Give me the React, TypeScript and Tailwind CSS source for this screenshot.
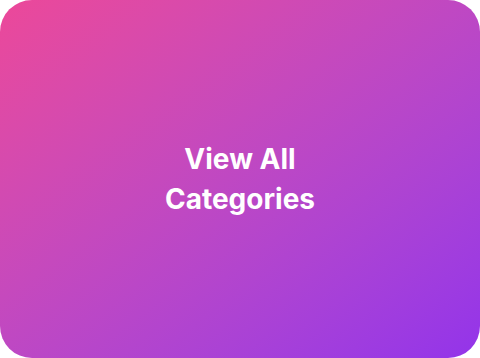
export default function App() {
  return (
    <div className="w-[480px] h-[358px] bg-white">
      <div className="w-full h-full rounded-[32px] bg-gradient-to-br from-[#ec4899] to-[#9333ea] flex items-center justify-center">
        <h2
          className="w-[200px] text-center text-white text-[28px] font-bold leading-[40px]"
          style={{ fontFamily: 'Inter, "Noto Sans", sans-serif' }}
        >
          View All Categories
        </h2>
      </div>
    </div>
  )
}
